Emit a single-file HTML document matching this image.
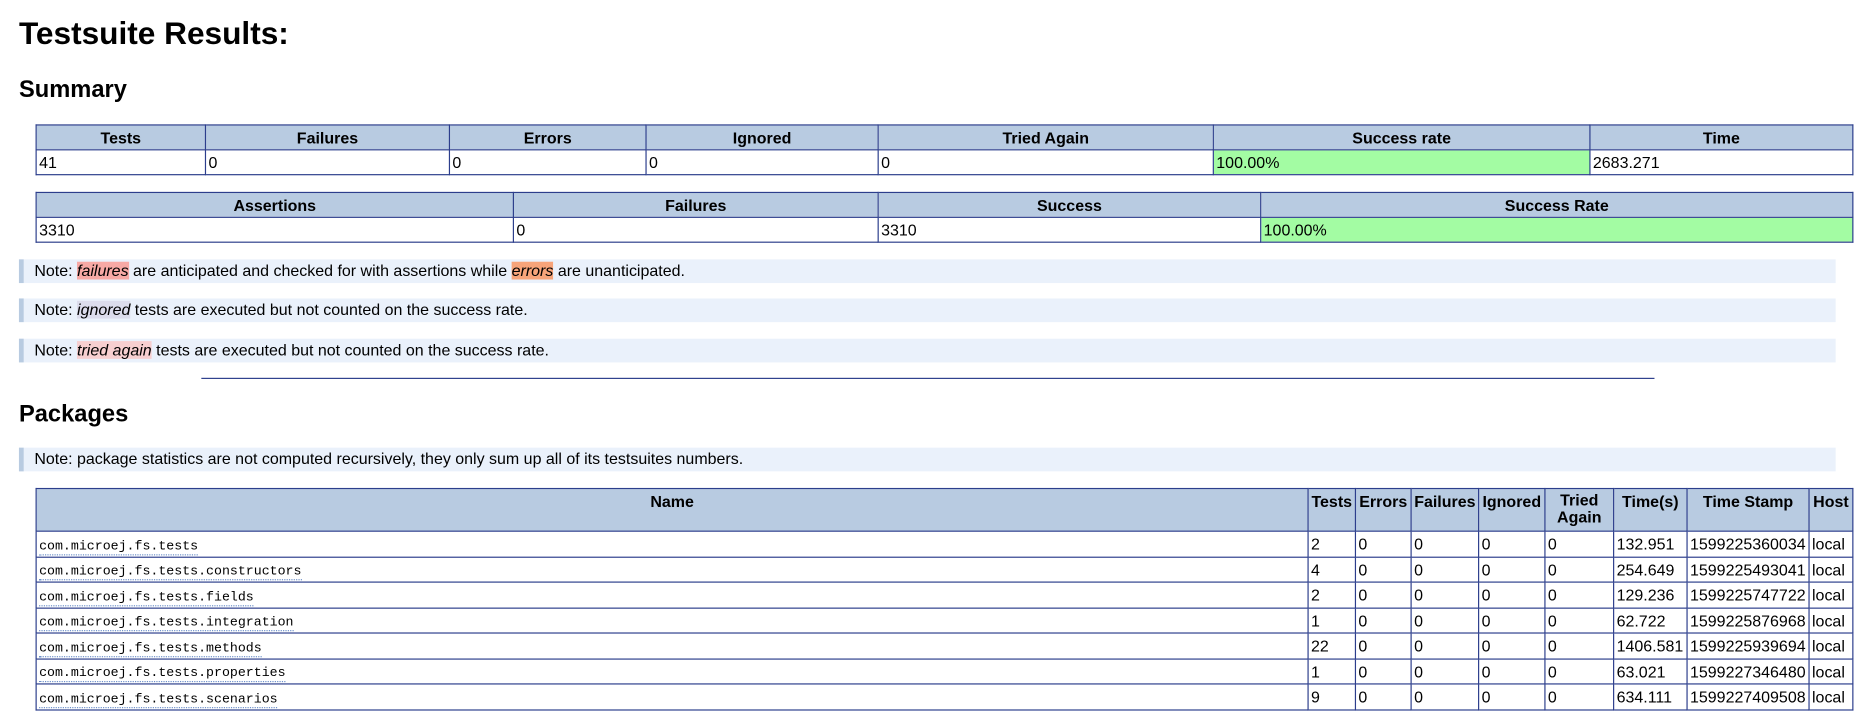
<!DOCTYPE html>
<html><head><style>
html,body{margin:0;background:#fff}
body{width:1857px;height:723px;overflow:hidden}
#w{position:relative;width:1568px;height:611px;transform:scale(1.18431);transform-origin:0 0;font-family:"Liberation Sans",Arial,sans-serif;font-size:13.5px;color:#000}
h1{position:absolute;left:16px;top:13px;margin:0;font-size:26.7px;font-weight:bold}
h2{position:absolute;left:16px;margin:0;font-size:20px;font-weight:bold}
table{position:absolute;left:30px;border-collapse:collapse;table-layout:fixed}
td,th{border:1px solid #2c3e8c;padding:0 2px;font-size:13.5px;white-space:nowrap;overflow:hidden}
th{background:#b8cbe1;font-weight:bold;text-align:center}
.g{background:#a3fca3}
.note{position:absolute;left:16px;height:20px;background:#eaf1fb;border-left:4px solid #b8cbe1;padding-left:9px;line-height:20px;box-sizing:border-box;width:1534px}
.f{background:#f7a9a5;font-style:italic}
.e{background:#f7a47a;font-style:italic}
.i{background:#dcdcec;font-style:italic}
.t{background:#f7cfd0;font-style:italic}
.m{font-family:"Liberation Mono","Courier New",monospace;font-size:11.2px;border-bottom:1px dotted #6b8fc8}
hr{position:absolute;left:170px;top:319px;width:1227px;margin:0;border:0;border-top:1px solid #2c3e8c}
</style></head><body><div id="w">
<h1>Testsuite Results:</h1>
<h2 style="top:65px">Summary</h2>
<table style="top:105px;width:1535px">
<colgroup><col style="width:143px"><col style="width:206px"><col style="width:166px"><col style="width:196px"><col style="width:283px"><col style="width:318px"><col style="width:222px"></colgroup>
<tr style="height:21px"><th>Tests</th><th>Failures</th><th>Errors</th><th>Ignored</th><th>Tried Again</th><th>Success rate</th><th>Time</th></tr>
<tr style="height:21px"><td>41</td><td>0</td><td>0</td><td>0</td><td>0</td><td class="g">100.00%</td><td>2683.271</td></tr>
</table>
<table style="top:162px;width:1535px">
<colgroup><col style="width:403px"><col style="width:308px"><col style="width:323px"><col style="width:500px"></colgroup>
<tr style="height:21px"><th>Assertions</th><th>Failures</th><th>Success</th><th>Success Rate</th></tr>
<tr style="height:21px"><td>3310</td><td>0</td><td>3310</td><td class="g">100.00%</td></tr>
</table>
<div class="note" style="top:219px">Note: <span class="f">failures</span> are anticipated and checked for with assertions while <span class="e">errors</span> are unanticipated.</div>
<div class="note" style="top:252px">Note: <span class="i">ignored</span> tests are executed but not counted on the success rate.</div>
<div class="note" style="top:286px">Note: <span class="t">tried again</span> tests are executed but not counted on the success rate.</div>
<hr>
<h2 style="top:339px">Packages</h2>
<div class="note" style="top:378px">Note: package statistics are not computed recursively, they only sum up all of its testsuites numbers.</div>
<table style="top:412px;width:1535px">
<colgroup><col style="width:1074px"><col style="width:40px"><col style="width:47px"><col style="width:57px"><col style="width:56px"><col style="width:58px"><col style="width:62px"><col style="width:103px"><col style="width:37px"></colgroup>
<tr style="height:36px"><th style="vertical-align:top;padding-top:3px">Name</th><th style="vertical-align:top;padding-top:3px">Tests</th><th style="vertical-align:top;padding-top:3px">Errors</th><th style="vertical-align:top;padding-top:3px">Failures</th><th style="vertical-align:top;padding-top:3px">Ignored</th><th style="vertical-align:top;padding-top:3px;white-space:normal;line-height:14px">Tried Again</th><th style="vertical-align:top;padding-top:3px">Time(s)</th><th style="vertical-align:top;padding-top:3px">Time Stamp</th><th style="vertical-align:top;padding-top:3px">Host</th></tr>
<tr style="height:22px"><td><span class="m">com.microej.fs.tests</span></td><td>2</td><td>0</td><td>0</td><td>0</td><td>0</td><td>132.951</td><td>1599225360034</td><td>local</td></tr>
<tr style="height:21px"><td><span class="m">com.microej.fs.tests.constructors</span></td><td>4</td><td>0</td><td>0</td><td>0</td><td>0</td><td>254.649</td><td>1599225493041</td><td>local</td></tr>
<tr style="height:22px"><td><span class="m">com.microej.fs.tests.fields</span></td><td>2</td><td>0</td><td>0</td><td>0</td><td>0</td><td>129.236</td><td>1599225747722</td><td>local</td></tr>
<tr style="height:21px"><td><span class="m">com.microej.fs.tests.integration</span></td><td>1</td><td>0</td><td>0</td><td>0</td><td>0</td><td>62.722</td><td>1599225876968</td><td>local</td></tr>
<tr style="height:22px"><td><span class="m">com.microej.fs.tests.methods</span></td><td>22</td><td>0</td><td>0</td><td>0</td><td>0</td><td>1406.581</td><td>1599225939694</td><td>local</td></tr>
<tr style="height:21px"><td><span class="m">com.microej.fs.tests.properties</span></td><td>1</td><td>0</td><td>0</td><td>0</td><td>0</td><td>63.021</td><td>1599227346480</td><td>local</td></tr>
<tr style="height:22px"><td><span class="m">com.microej.fs.tests.scenarios</span></td><td>9</td><td>0</td><td>0</td><td>0</td><td>0</td><td>634.111</td><td>1599227409508</td><td>local</td></tr>
</table>
</div></body></html>
